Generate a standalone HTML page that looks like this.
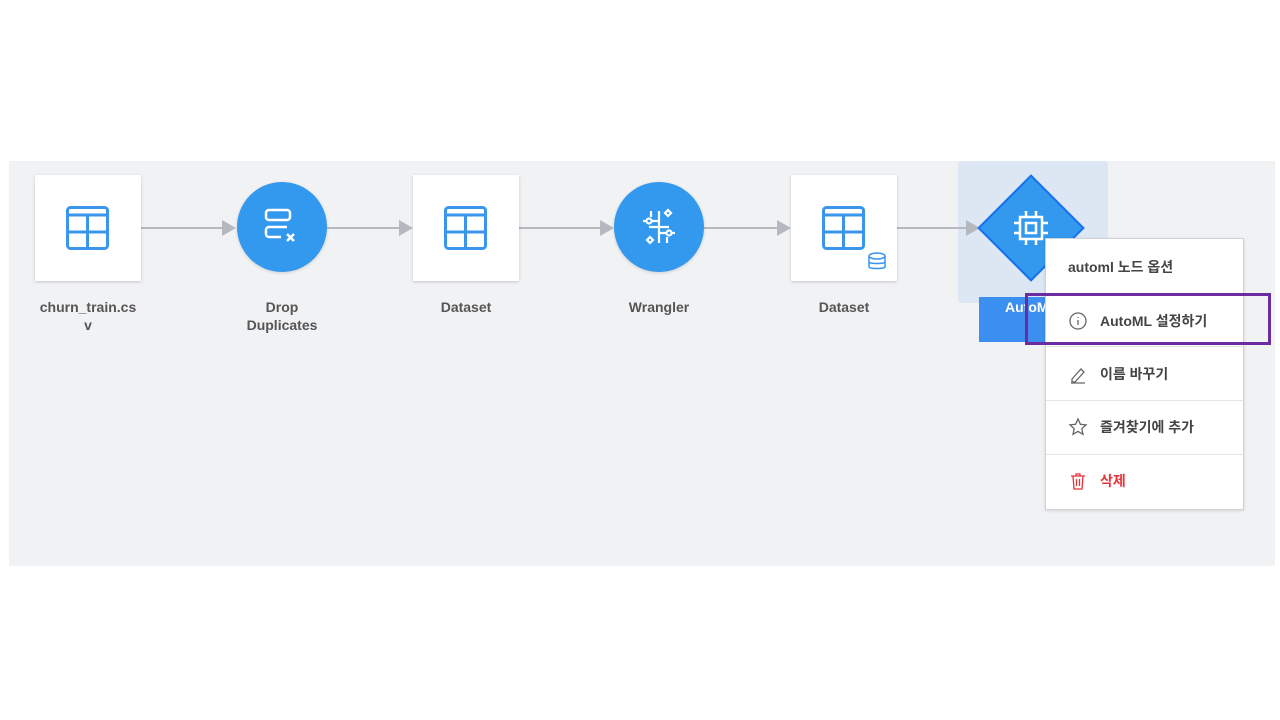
<!DOCTYPE html>
<html><head><meta charset="utf-8"><style>
body{margin:0;width:1280px;height:720px;background:#fff;position:relative;overflow:hidden;font-family:"Liberation Sans","Noto Sans CJK KR",sans-serif}
.canvas{position:absolute;left:9px;top:161px;width:1266px;height:405px;background:#f1f2f4}
.box{position:absolute;width:106px;height:106px;background:#fff;box-shadow:0 1px 3px rgba(0,0,0,.18);top:175px}
.circ{position:absolute;width:90px;height:90px;border-radius:50%;background:#3399ee;top:182px;box-shadow:0 1px 3px rgba(0,0,0,.15)}
.lbl{position:absolute;width:140px;text-align:center;font-size:14px;font-weight:bold;color:#555;line-height:18px;top:298px}
.line{position:absolute;height:2px;background:#b5b9bf;top:227px}
.arr{position:absolute;top:220px;width:0;height:0;border-top:8px solid transparent;border-bottom:8px solid transparent;border-left:14px solid #b5b9bf}
.menu{position:absolute;left:1045px;top:238px;width:197px;height:270px;background:#fff;border:1px solid #cfd2d6;box-shadow:0 1px 3px rgba(0,0,0,.12)}
.it{position:absolute;left:0;width:197px;font-size:14px;font-weight:bold;color:#444;display:flex;align-items:center}
.sep{position:absolute;left:0;width:197px;height:1px;background:#e3e5e8}
</style></head><body>
<div class="canvas"></div>
<div style="position:absolute;left:958px;top:161px;width:150px;height:142px;background:#dce7f3;border-radius:4px"></div>
<div style="position:absolute;left:979px;top:297px;width:66px;height:45px;background:#3b8ff0"></div>
<div style="position:absolute;left:1005px;top:299px;color:#fff;font-weight:bold;font-size:14px">AutoML</div>

<div class="line" style="left:141px;width:85px"></div><div class="arr" style="left:222px"></div>
<div class="line" style="left:327px;width:75px"></div><div class="arr" style="left:399px"></div>
<div class="line" style="left:519px;width:85px"></div><div class="arr" style="left:600px"></div>
<div class="line" style="left:704px;width:78px"></div><div class="arr" style="left:777px"></div>
<div class="line" style="left:897px;width:72px"></div><div class="arr" style="left:966px"></div>

<svg style="position:absolute;left:0;top:0" width="0" height="0"><defs>
<g id="tbl"><rect x="1.5" y="1.5" width="40" height="41" rx="3" fill="none" stroke="#3a96ec" stroke-width="3"/><line x1="1.5" y1="9" x2="41.5" y2="9" stroke="#3a96ec" stroke-width="3"/><line x1="1.5" y1="26" x2="41.5" y2="26" stroke="#3a96ec" stroke-width="3"/><line x1="21.5" y1="9" x2="21.5" y2="42" stroke="#3a96ec" stroke-width="3"/></g></defs></svg>

<div class="box" style="left:35px"><svg style="position:absolute;left:31px;top:31px" width="44" height="44"><use href="#tbl"/></svg></div>
<div class="box" style="left:413px"><svg style="position:absolute;left:31px;top:31px" width="44" height="44"><use href="#tbl"/></svg></div>
<div class="box" style="left:791px"><svg style="position:absolute;left:31px;top:31px" width="44" height="44"><use href="#tbl"/></svg>
<svg style="position:absolute;left:76px;top:77px" width="20" height="20"><ellipse cx="10" cy="4" rx="8" ry="3" fill="#fff" stroke="#3a96ec" stroke-width="1.5"/><path d="M2 4v11c0 2 16 2 16 0V4M2 10c0 2 16 2 16 0" fill="none" stroke="#3a96ec" stroke-width="1.5"/></svg></div>

<div class="circ" style="left:237px"><svg style="position:absolute;left:25px;top:25px" width="40" height="40" fill="none" stroke="#fff" stroke-width="2.5"><rect x="4" y="3" width="24" height="10" rx="3"/><path d="M25 20H7a3 3 0 0 0-3 3v4a3 3 0 0 0 3 3h12"/><path d="M25 27l7 7M32 27l-7 7"/></svg></div>
<div class="circ" style="left:614px"><svg style="position:absolute;left:23px;top:23px" width="44" height="44" fill="none" stroke="#fff" stroke-width="2.2"><path d="M22 6v32M22 16h-8M6 16h4M22 28h8M34 28h4M12 22h20M14 6v6M30 32v6"/><circle cx="12" cy="16" r="2.5"/><circle cx="32" cy="28" r="2.5"/><path d="M10 35l3-3 3 3-3 3zM28 8l3-3 3 3-3 3z"/></svg></div>

<div style="position:absolute;left:993px;top:190px;width:76px;height:76px;background:#3399ee;border:2px solid #1a72ee;transform:rotate(45deg);box-sizing:border-box"></div>
<svg style="position:absolute;left:1010px;top:207px" width="42" height="42" fill="none" stroke="#fff" stroke-width="2.5"><rect x="10" y="10" width="22" height="22"/><rect x="16" y="16" width="10" height="10"/><path d="M16 4v6M26 4v6M16 32v6M26 32v6M4 16h6M4 26h6M32 16h6M32 26h6"/></svg>

<div class="lbl" style="left:18px">churn_train.cs<br>v</div>
<div class="lbl" style="left:212px">Drop<br>Duplicates</div>
<div class="lbl" style="left:396px">Dataset</div>
<div class="lbl" style="left:589px">Wrangler</div>
<div class="lbl" style="left:774px">Dataset</div>

<div class="menu">
<div class="it" style="top:18px;left:22px">automl 노드 옵션</div>
<div class="it" style="top:72px;left:22px"><svg width="20" height="20" fill="none" stroke="#666" stroke-width="1.3"><circle cx="10" cy="10" r="8"/><path d="M10 9v5M10 6v1"/></svg><span style="margin-left:12px">AutoML 설정하기</span></div>
<div class="sep" style="top:107px"></div>
<div class="it" style="top:125px;left:22px"><svg width="20" height="20" fill="none" stroke="#666" stroke-width="1.3"><path d="M4 15l9-10 3 3-9 10H4zM3 19h14"/></svg><span style="margin-left:12px">이름 바꾸기</span></div>
<div class="sep" style="top:161px"></div>
<div class="it" style="top:178px;left:22px"><svg width="20" height="20" fill="none" stroke="#666" stroke-width="1.3"><path d="M10 2l2.4 5.3 5.6.6-4.2 3.8 1.2 5.6L10 14.4 5 17.3l1.2-5.6L2 7.9l5.6-.6z"/></svg><span style="margin-left:12px">즐겨찾기에 추가</span></div>
<div class="sep" style="top:215px"></div>
<div class="it" style="top:232px;left:22px;color:#e8333a"><svg width="20" height="20" fill="none" stroke="#e8333a" stroke-width="1.3"><path d="M3 5h14M8 5V3h4v2M5 5l1 13h8l1-13M8.5 8v7M11.5 8v7"/></svg><span style="margin-left:12px">삭제</span></div>
</div>
<div style="position:absolute;left:1025px;top:293px;width:246px;height:52px;border:3px solid #6a2c9e;box-sizing:border-box"></div>
</body></html>
